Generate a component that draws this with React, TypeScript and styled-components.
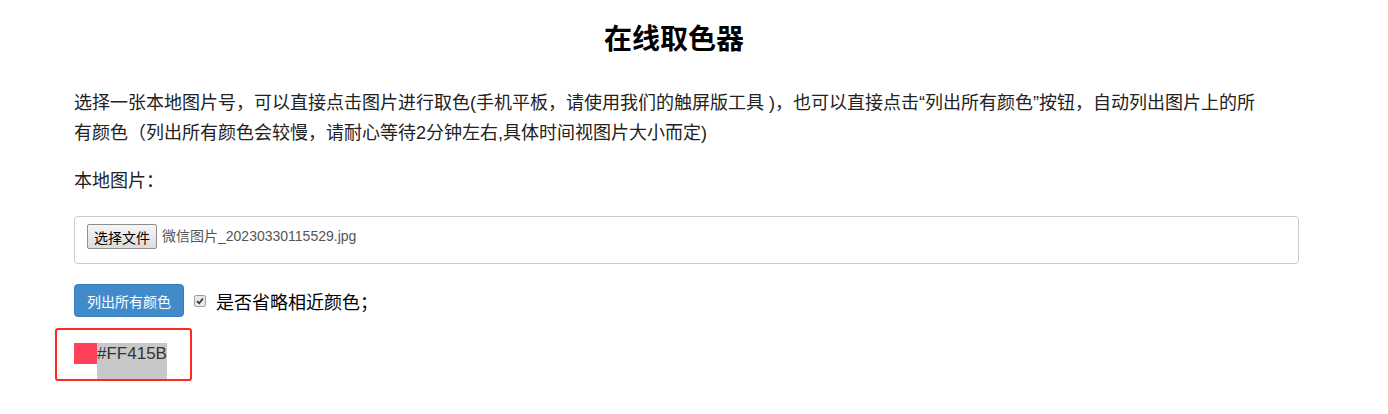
import styled, { createGlobalStyle } from 'styled-components';

const GlobalStyle = createGlobalStyle`
  body {
    margin: 0;
    background: #fff;
    font-family: "Liberation Sans", "Noto Sans CJK SC", sans-serif;
    color: #111;
  }
`;

const Page = styled.div`
  width: 1200px;
  padding: 20px 0 0 74px;
`;

const Title = styled.h1`
  margin: 0;
  font-size: 28px;
  line-height: 40px;
  font-weight: bold;
  text-align: center;
  color: #000;
`;

const Intro = styled.p`
  margin: 28px 0 0;
  width: 1190px;
  font-size: 18px;
  line-height: 30px;
  color: #222;
`;

const FieldLabel = styled.div`
  margin-top: 18px;
  font-size: 18px;
  line-height: 30px;
  color: #222;
`;

const FileBox = styled.div`
  box-sizing: border-box;
  margin-top: 20px;
  width: 1225px;
  height: 48px;
  border: 1px solid #ccc;
  border-radius: 4px;
  padding: 7px 12px;
  display: flex;
  align-items: flex-start;
  gap: 5px;
`;

const FileButton = styled.button`
  box-sizing: border-box;
  height: 25px;
  padding: 0 6px;
  font-family: inherit;
  font-size: 14px;
  color: #000;
  background: linear-gradient(#f6f6f6, #dcdcdc);
  border: 1px solid #8f8f8f;
  border-radius: 2px;
`;

const FileName = styled.span`
  font-size: 14px;
  line-height: 25px;
  color: #555;
`;

const ActionRow = styled.div`
  margin-top: 20px;
  display: flex;
  align-items: center;
  gap: 10px;
`;

const PrimaryButton = styled.button`
  box-sizing: border-box;
  width: 110px;
  height: 33px;
  font-family: inherit;
  font-size: 14px;
  color: #fff;
  background: #428bca;
  border: 1px solid #357ebd;
  border-radius: 4px;
`;

const Check = styled.span`
  box-sizing: border-box;
  width: 12px;
  height: 12px;
  border: 1px solid #a0a0a0;
  border-radius: 2px;
  background: #e9e9e9;
  display: inline-flex;
  align-items: center;
  justify-content: center;
`;

const CheckLabel = styled.span`
  font-size: 18px;
  color: #000;
`;

const Highlight = styled.div`
  box-sizing: border-box;
  margin: 11px 0 0 -19px;
  width: 137px;
  height: 53px;
  border: 2px solid #ff2a1f;
  border-radius: 3px;
  padding: 13px 0 0 17px;
  display: flex;
`;

const Swatch = styled.span<{ color: string }>`
  width: 23px;
  height: 21px;
  background: ${(p) => p.color};
`;

const HexText = styled.span`
  font-size: 17px;
  line-height: 21px;
  color: #333;
  background: #c8c8c8;
`;

export default function App() {
  return (
    <>
      <GlobalStyle />
      <Page>
        <Title>在线取色器</Title>
        <Intro>
          选择一张本地图片号，可以直接点击图片进行取色(手机平板，请使用我们的触屏版工具 )，也可以直接点击“列出所有颜色”按钮，自动列出图片上的所有颜色（列出所有颜色会较慢，请耐心等待2分钟左右,具体时间视图片大小而定)
        </Intro>
        <FieldLabel>本地图片：</FieldLabel>
        <FileBox>
          <FileButton>选择文件</FileButton>
          <FileName>微信图片_20230330115529.jpg</FileName>
        </FileBox>
        <ActionRow>
          <PrimaryButton>列出所有颜色</PrimaryButton>
          <Check>
            <svg width="8" height="8" viewBox="0 0 8 8">
              <path d="M1 4.2 L3.1 6.2 L7 1.5" fill="none" stroke="#333" strokeWidth="1.7" />
            </svg>
          </Check>
          <CheckLabel>是否省略相近颜色；</CheckLabel>
        </ActionRow>
        <Highlight>
          <Swatch color="#ff415b" />
          <HexText>#FF415B</HexText>
        </Highlight>
      </Page>
    </>
  );
}
